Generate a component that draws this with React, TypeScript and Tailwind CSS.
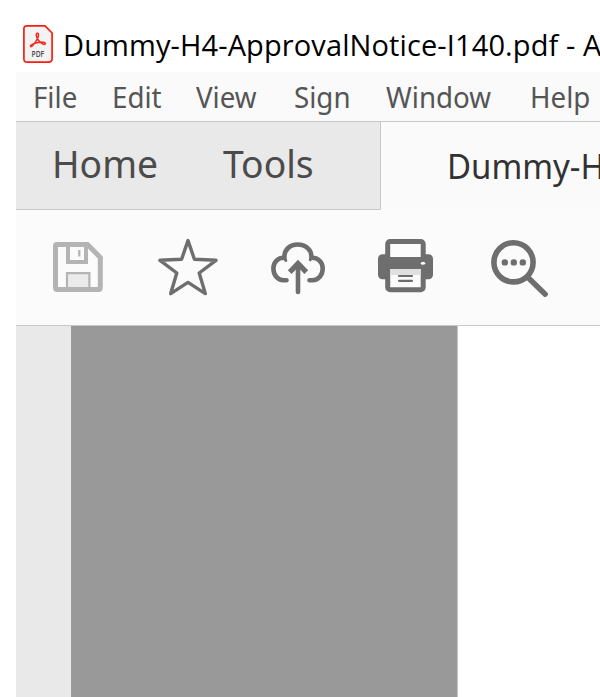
import type { ReactNode } from "react";

function PdfIcon() {
  return (
    <svg className="block h-[38px] w-[30px] shrink-0" viewBox="0 0 30 38" fill="none">
      <path d="M4 .9H22L29.1 8V33.5Q29.1 37.1 25.5 37.1H4.3Q.9 37.1 .9 33.7V4Q.9 .9 4 .9Z" fill="#f3f3f3" stroke="#fa1e12" strokeWidth="1.7" />
      <path
        d="M14.4 8.2C16.3 8 15.7 12 13.6 15.2C11.4 18.8 9 22.4 7.7 21.7C6.3 20.5 10.8 18 15.1 17.4C19.4 16.8 22.7 17.4 22.4 18.8C21.8 20.5 17.7 18.4 15.4 15.3C13.1 12 12.5 8.5 14.4 8.2Z"
        stroke="#f22b20"
        strokeWidth="1.5"
      />
      <text x="8.6" y="32.1" textLength="12.6" lengthAdjust="spacingAndGlyphs" fontFamily="Open Sans, sans-serif" fontSize="8.6" fontWeight="600" fill="#4b4b4b">
        PDF
      </text>
    </svg>
  );
}

function SaveIcon() {
  return (
    <svg className="block h-[60px] w-[60px]" viewBox="48 237 60 60" fill="none">
      <path d="M57 244.5H87.5L100.3 257.5V287.5Q100.3 289.5 98.3 289.5H57.5Q55.5 289.5 55.5 287.5V246Q55.5 244.5 57 244.5Z" stroke="#b4b4b4" strokeWidth="5" />
      <path d="M68 244V262H86V244" stroke="#b4b4b4" strokeWidth="4" />
      <path d="M79.3 250V256.5" stroke="#b4b4b4" strokeWidth="2.3" />
      <path d="M67 287V273.2H89.4V287" fill="#ebebeb" stroke="#b4b4b4" strokeWidth="2.2" />
    </svg>
  );
}

function StarIcon() {
  return (
    <svg className="block h-[66px] w-[66px]" viewBox="155 234 66 66" fill="none">
      <path d="M188 240.6L194.4 259.2L216 260.3L199.2 273L205.3 293.6L188 282.4L170.7 293.6L176.8 273L160 260.3L181.6 259.2Z" stroke="#6e6e6e" strokeWidth="3.4" strokeLinejoin="round" />
    </svg>
  );
}

function CloudIcon() {
  return (
    <svg className="block h-[60px] w-[60px]" viewBox="268 237 60 60" fill="none" stroke="#6e6e6e" strokeWidth="4.6" strokeLinecap="round">
      <path d="M286.5 280.2H283.5C277.5 280.2 273.4 275 273.4 268.5C273.4 262 278 257.5 284.4 257.8C284 249.5 290.2 244.5 297.5 244.5C305.5 244.5 312 249.7 311.4 257.8C318 257.5 322.7 262 322.7 268.5C322.7 275 318.5 280.2 312.5 280.2H309.5" />
      <path d="M298 292V265" />
      <path d="M291.5 270.3L298 263.6L304.5 270.3" strokeWidth="5.2" strokeLinecap="square" />
      <path d="M284.2 257.8L285.8 260.5M311.6 257.8L310.3 259.8" strokeWidth="3" />
    </svg>
  );
}

function PrintIcon() {
  return (
    <svg className="block h-[60px] w-[60px]" viewBox="376 237 60 60" fill="none">
      <rect x="378" y="254.3" width="55" height="25" rx="4.5" fill="#6e6e6e" />
      <rect x="387.7" y="241.5" width="35.5" height="48.2" rx="2.5" fill="#fbfbfb" stroke="#6e6e6e" strokeWidth="5" />
      <rect x="387" y="257" width="37" height="12" fill="#6e6e6e" />
      <rect x="390.4" y="269" width="30.2" height="6" fill="#e0e0e0" />
      <path d="M399 276H412M399 280.8H412" stroke="#6e6e6e" strokeWidth="2.2" strokeLinecap="round" />
      <ellipse cx="423" cy="263.3" rx="2.2" ry="1.5" fill="#fbfbfb" />
    </svg>
  );
}

function SearchIcon() {
  return (
    <svg className="block h-[62px] w-[62px]" viewBox="488 237 62 62" fill="none">
      <circle cx="513.5" cy="262.3" r="19.6" stroke="#6e6e6e" strokeWidth="5.6" />
      <path d="M528 277.5L545.2 294.2" stroke="#6e6e6e" strokeWidth="5.4" strokeLinecap="round" />
      <g fill="#6e6e6e">
        <circle cx="504.8" cy="262.4" r="3.2" />
        <circle cx="513.8" cy="262.4" r="3.2" />
        <circle cx="522.8" cy="262.4" r="3.2" />
      </g>
    </svg>
  );
}

function MenuItem({ className, children }: { className: string; children: ReactNode }) {
  return (
    <button className={`shrink-0 text-left ${className}`}>
      <span className="inline-block origin-left scale-x-[0.955]">{children}</span>
    </button>
  );
}

export default function App() {
  return (
    <div className="flex h-[697px] w-[600px] flex-col overflow-hidden bg-white font-['Noto_Sans','Open_Sans',sans-serif] whitespace-nowrap">
      <header className="flex h-[72px] shrink-0 items-start pt-[25px] pl-[23px]">
        <PdfIcon />
        <h1 className="ml-[10px] shrink-0 font-['Open_Sans','Noto_Sans',sans-serif] text-[29px] leading-[40px] tracking-[0.11px] text-black">
          Dummy-H4-ApprovalNotice-I140.pdf - A
        </h1>
      </header>
      <main className="ml-4 flex min-h-0 flex-1 flex-col">
        <nav className="flex h-[50px] shrink-0 border-b border-[#c8c8c8] bg-[#fafafa] pl-[17px] text-[29px] leading-[49px] text-[#555555]">
          <MenuItem className="w-[79px]">File</MenuItem>
          <MenuItem className="w-[84px]">Edit</MenuItem>
          <MenuItem className="w-[98px]">View</MenuItem>
          <MenuItem className="w-[92px]">Sign</MenuItem>
          <MenuItem className="w-[144px]">Window</MenuItem>
          <MenuItem className="w-[60px]">Help</MenuItem>
        </nav>
        <div className="flex h-[88px] shrink-0 bg-[#fafafa]">
          <div className="flex w-[365px] shrink-0 items-start border-r border-b border-[#c8c8c8] bg-[#e9e9e9] pl-[36px] text-[39px] leading-[82px] text-[#4b4b4b]">
            <MenuItem className="w-[171px]">Home</MenuItem>
            <MenuItem className="w-[100px]">Tools</MenuItem>
          </div>
          <div className="min-w-0 flex-1 overflow-hidden pl-[66px] text-[34.5px] leading-[88px] text-[#323232]">
            <span className="inline-block origin-left scale-x-[0.955]">Dummy-H</span>
          </div>
        </div>
        <div className="flex h-[116px] shrink-0 items-start border-b border-[#c8c8c8] bg-[#fbfbfb] pt-[27px] pl-8">
          <SaveIcon />
          <div className="-mt-[3px] ml-[47px]"><StarIcon /></div>
          <div className="ml-[47px]"><CloudIcon /></div>
          <div className="ml-12"><PrintIcon /></div>
          <div className="ml-[52px]"><SearchIcon /></div>
        </div>
        <div className="flex min-h-0 flex-1">
          <div className="w-[55px] bg-[#e9e9e9]" />
          <div className="w-[387px] border-r border-[#c8c8c8] bg-[#999999]" />
          <div className="flex-1 bg-white" />
        </div>
      </main>
    </div>
  );
}
